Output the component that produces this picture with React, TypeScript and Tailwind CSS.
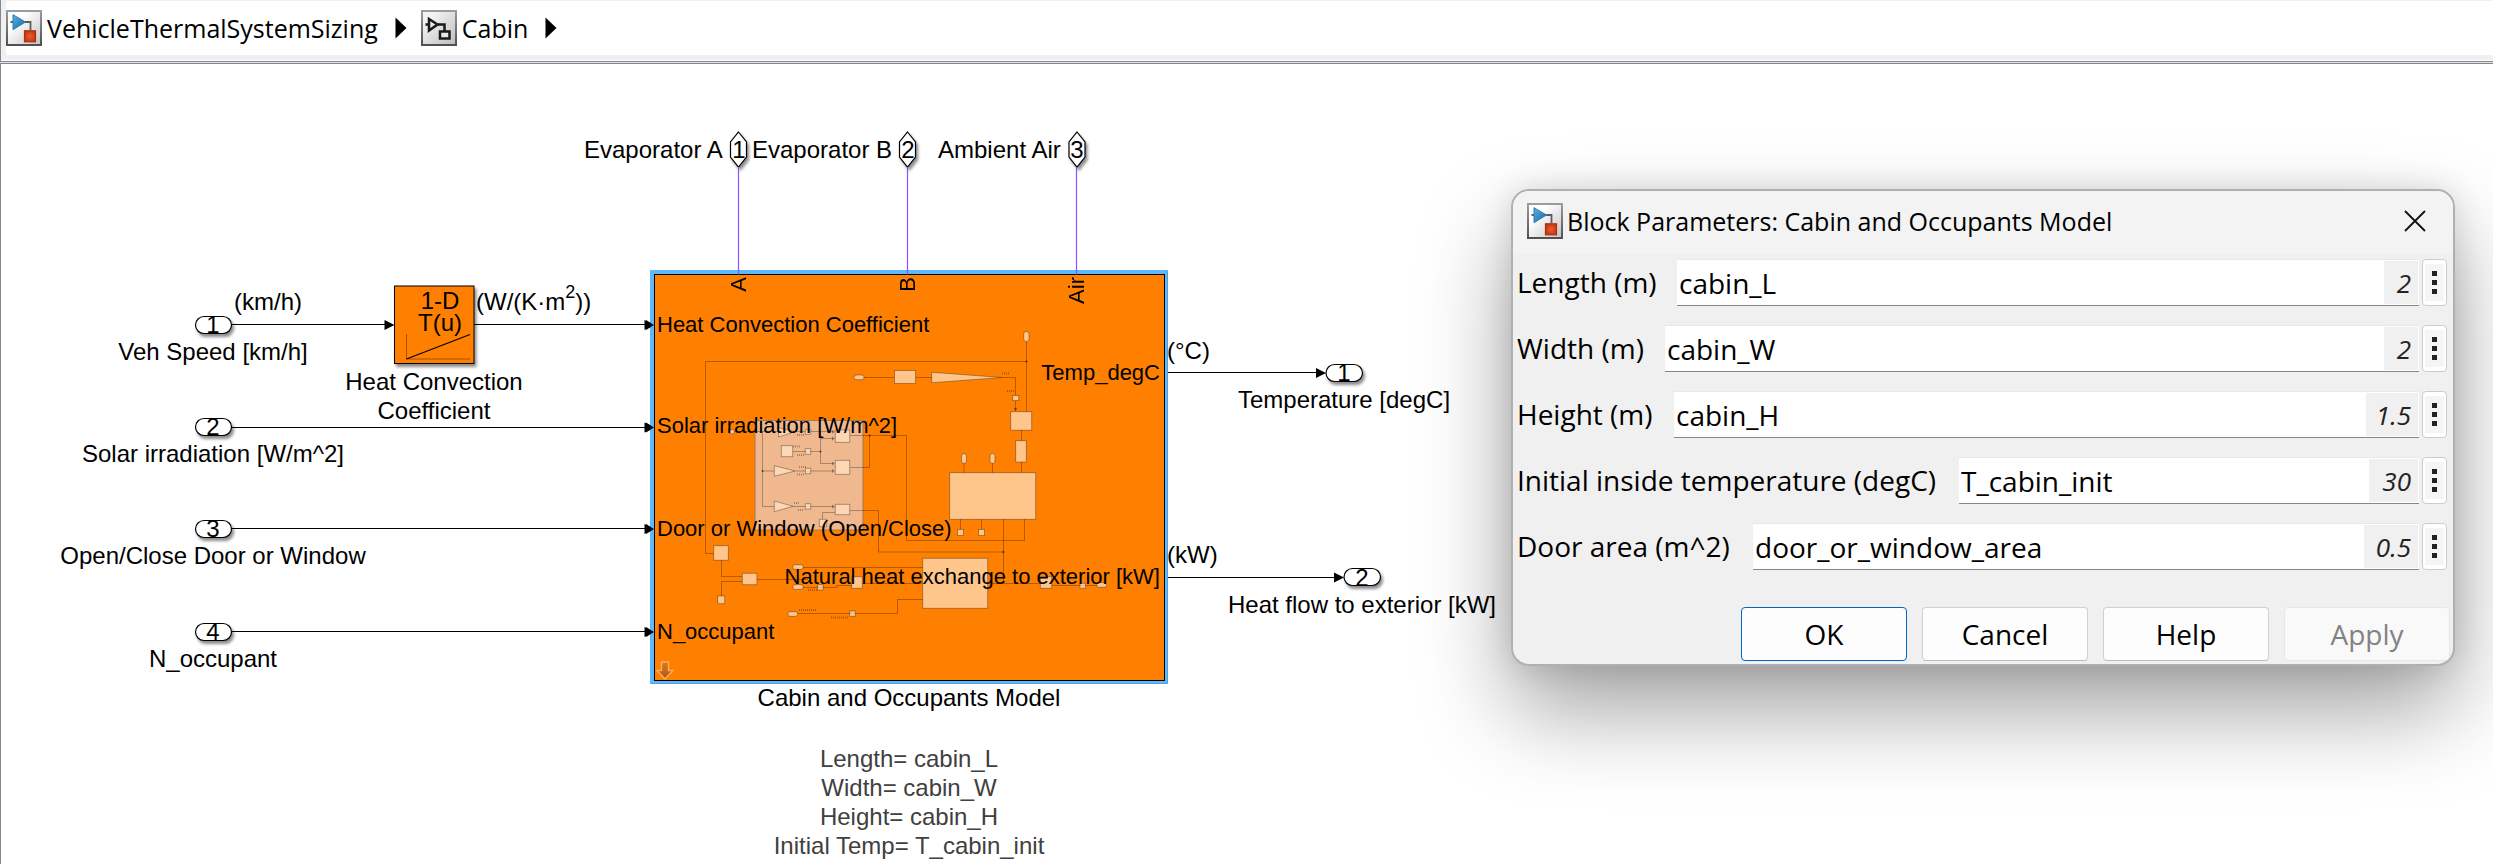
import React from "react";

type Param = {
  id: string;
  label: string;
  labelWidth: string;
  expression: string;
  value: string;
  valueWidth: string;
};

const params: Param[] = [
  { id: "length", label: "Length (m)", labelWidth: "w-[160px]", expression: "cabin_L", value: "2", valueWidth: "w-[34px]" },
  { id: "width", label: "Width (m)", labelWidth: "w-[148px]", expression: "cabin_W", value: "2", valueWidth: "w-[34px]" },
  { id: "height", label: "Height (m)", labelWidth: "w-[157px]", expression: "cabin_H", value: "1.5", valueWidth: "w-[52px]" },
  { id: "temperature", label: "Initial inside temperature (degC)", labelWidth: "w-[442px]", expression: "T_cabin_init", value: "30", valueWidth: "w-[49px]" },
  { id: "door", label: "Door area (m^2)", labelWidth: "w-[236px]", expression: "door_or_window_area", value: "0.5", valueWidth: "w-[54px]" },
];

const labels: { text: string; place: string }[] = [
  { text: "Evaporator A", place: "left-[584px] top-[72px]" },
  { text: "Evaporator B", place: "left-[752px] top-[72px]" },
  { text: "Ambient Air", place: "left-[938px] top-[72px]" },
  { text: "(km/h)", place: "left-[234px] top-[224px]" },
  { text: "Veh Speed [km/h]", place: "left-0 w-[426px] text-center top-[274px]" },
  { text: "Solar irradiation [W/m^2]", place: "left-0 w-[426px] text-center top-[376px]" },
  { text: "Open/Close Door or Window", place: "left-0 w-[426px] text-center top-[478px]" },
  { text: "N_occupant", place: "left-0 w-[426px] text-center top-[581px]" },
  { text: "(°C)", place: "left-[1167px] top-[273px]" },
  { text: "(kW)", place: "left-[1167px] top-[477px]" },
  { text: "Temperature [degC]", place: "left-[1194px] w-[300px] text-center top-[322px]" },
  { text: "Heat flow to exterior [kW]", place: "left-[1212px] w-[300px] text-center top-[527px]" },
  { text: "Cabin and Occupants Model", place: "left-[709px] w-[400px] text-center top-[620px]" },
  { text: "1", place: "left-[203px] w-[20px] text-center top-[247px]" },
  { text: "2", place: "left-[203px] w-[20px] text-center top-[349px]" },
  { text: "3", place: "left-[203px] w-[20px] text-center top-[451px]" },
  { text: "4", place: "left-[203px] w-[20px] text-center top-[554px]" },
  { text: "1", place: "left-[1334px] w-[20px] text-center top-[295px]" },
  { text: "2", place: "left-[1352px] w-[20px] text-center top-[500px]" },
  { text: "1", place: "left-[729px] w-[20px] text-center top-[72px]" },
  { text: "2", place: "left-[898px] w-[20px] text-center top-[72px]" },
  { text: "3", place: "left-[1067px] w-[20px] text-center top-[72px]" },
];

const blockPorts: { text: string; place: string }[] = [
  { text: "Heat Convection Coefficient", place: "left-[657px] top-[247px]" },
  { text: "Solar irradiation [W/m^2]", place: "left-[657px] top-[348px]" },
  { text: "Door or Window (Open/Close)", place: "left-[657px] top-[451px]" },
  { text: "N_occupant", place: "left-[657px] top-[554px]" },
  { text: "Temp_degC", place: "left-[860px] w-[300px] text-right top-[295px]" },
  { text: "Natural heat exchange to exterior [kW]", place: "left-[760px] w-[400px] text-right top-[499px]" },
];

const sidePorts: { text: string; place: string }[] = [
  { text: "A", place: "left-[725px]" },
  { text: "B", place: "left-[894px]" },
  { text: "Air", place: "left-[1063px]" },
];

function ModelIcon({ id }: { id: string }) {
  return (
    <svg width="36" height="36" viewBox="0 0 36 36" aria-hidden="true" className="shrink-0">
      <defs>
        <linearGradient id={id + "-bg"} x1="0" y1="0" x2="1" y2="1">
          <stop offset="0.3" stopColor="#ffffff" />
          <stop offset="1" stopColor="#c2c2c2" />
        </linearGradient>
        <linearGradient id={id + "-edge"} x1="0" y1="0" x2="0" y2="1">
          <stop offset="0" stopColor="#9c9c9c" />
          <stop offset="1" stopColor="#505050" />
        </linearGradient>
        <linearGradient id={id + "-tri"} x1="0" y1="0" x2="1" y2="1">
          <stop offset="0" stopColor="#5db4e6" />
          <stop offset="1" stopColor="#14629c" />
        </linearGradient>
        <radialGradient id={id + "-sq"}>
          <stop offset="0" stopColor="#ef5a2c" />
          <stop offset="1" stopColor="#c93a12" />
        </radialGradient>
      </defs>
      <rect x="1" y="1" width="34" height="34" fill={`url(#${id}-bg)`} stroke={`url(#${id}-edge)`} strokeWidth="2" />
      <path d="M4.500 12H7M19 12h5.500v8" fill="none" stroke="#5d5d5d" strokeWidth="1.800" />
      <path d="M7 4.700v15L19.500 12z" fill={`url(#${id}-tri)`} stroke="#2b7db8" strokeWidth="1" />
      <rect x="18.500" y="20.800" width="11" height="11" fill={`url(#${id}-sq)`} stroke="#a3300f" strokeWidth="1.200" />
    </svg>
  );
}

function SubsystemIcon() {
  return (
    <svg width="36" height="36" viewBox="0 0 36 36" aria-hidden="true" className="shrink-0">
      <defs>
        <linearGradient id="sub-bg" x1="0" y1="0" x2="1" y2="1">
          <stop offset="0.2" stopColor="#f4f4f4" />
          <stop offset="1" stopColor="#bcbcbc" />
        </linearGradient>
        <linearGradient id="sub-edge" x1="0" y1="0" x2="0" y2="1">
          <stop offset="0" stopColor="#9c9c9c" />
          <stop offset="1" stopColor="#505050" />
        </linearGradient>
      </defs>
      <rect x="1" y="1" width="34" height="34" fill="url(#sub-bg)" stroke="url(#sub-edge)" strokeWidth="2" />
      <g fill="#e8e8e8" stroke="#1a1a1a" strokeWidth="2.500">
        <path d="M4.500 14.500H8M17 14.500h6.500V21" fill="none" />
        <path d="M8 9v11.500l8.500-6z" />
        <rect x="19" y="21.500" width="9.500" height="7" />
      </g>
    </svg>
  );
}

function Chevron() {
  return (
    <svg width="12" height="22" viewBox="0 0 12 22" aria-hidden="true" className="shrink-0">
      <path d="M0.500 0.500v21L11.500 11z" fill="#000" />
    </svg>
  );
}

function Wires() {
  return (
    <svg width="1512" height="800" viewBox="0 64 1512 800" aria-hidden="true" className="absolute left-0 top-0">
      <defs>
        <filter id="drop" x="-20%" y="-20%" width="150%" height="150%">
          <feDropShadow dx="2" dy="3" stdDeviation="1.500" floodColor="#000" floodOpacity="0.45" />
        </filter>
        <linearGradient id="down" x1="0" y1="0" x2="0" y2="1">
          <stop offset="0" stopColor="#e07818" />
          <stop offset="1" stopColor="#a8581c" />
        </linearGradient>
      </defs>

      <g stroke="#000" strokeWidth="1.200" fill="none">
        <path d="M232 324.500H386M474 324.500H646M232 427.500H646M232 528.500H646M232 631.500H646M1165 372.500H1318M1165 577.500H1336" />
      </g>
      <g fill="#000">
        <path d="M384.500 320v10l10-5zM644.500 320v10l10-5zM644.500 422.500v10l10-5zM644.500 524v10l10-5zM644.500 627v10l10-5zM1316 368v10l10-5zM1334 572.500v10l10-5z" />
      </g>

      <g fill="#fff" stroke="#000" strokeWidth="1.200" filter="url(#drop)">
        <rect x="195.500" y="316.500" width="36" height="17" rx="8.500" />
        <rect x="195.500" y="418.500" width="36" height="17" rx="8.500" />
        <rect x="195.500" y="520.500" width="36" height="17" rx="8.500" />
        <rect x="195.500" y="623.500" width="36" height="17" rx="8.500" />
        <rect x="1326" y="364.500" width="36.500" height="17" rx="8.500" />
        <rect x="1344" y="568.500" width="36.500" height="17" rx="8.500" />
      </g>
      <g fill="#fff" stroke="#000" strokeWidth="1.200" filter="url(#drop)">
        <path d="M738.500 132l8 10v15l-8 10-8-10v-15z" />
        <path d="M907.500 132l8 10v15l-8 10-8-10v-15z" />
        <path d="M1077 132l8 10v15l-8 10-8-10v-15z" />
      </g>

      <g filter="url(#drop)">
        <rect x="394.500" y="286" width="79.500" height="77.500" fill="#ff8000" stroke="#000" />
      </g>
      <path d="M406.500 334v25H470" fill="none" stroke="#a65300" />
      <path d="M406.500 359L470 334.500" fill="none" stroke="#000" strokeWidth="1.200" />

      <rect x="650" y="270" width="518" height="414" fill="#5fb8fa" />
      <path d="M651 683.500H1167.500V271" fill="none" stroke="#4ba3e3" />
      <rect x="654.500" y="274.500" width="510" height="406" fill="#ff8000" stroke="#000" />
      <path d="M738.500 167V274.500M907.500 167V274.500M1076.500 167V274.500" fill="none" stroke="#8c52ff" strokeWidth="1.200" />
      <path d="M646 320v10l8-5zM646 422.500v10l8-5zM646 524v10l8-5zM646 627v10l8-5z" fill="#000" />

      <rect x="755" y="420.500" width="108" height="109.500" fill="#f0b88e" stroke="#a87850" />

      <g fill="none" stroke="#000" strokeOpacity="0.320" strokeWidth="0.900">
        <path d="M714 553.500H705.500V361.500H1026.500" />
        <path d="M1026.500 341V412" />
        <path d="M864 377.500H894M916 377.500H932M1002 377.500H1015.500V395M1015.500 401V411" />
        <path d="M1021.500 430V441M1021.500 462V473M964 463V473M992.500 463V473" />
        <path d="M960.500 519V529M981.500 519V529M1003.500 519V583.500M1024.500 519V540.500H906.500V435.500H850" />
        <path d="M734 431.500H778M762.500 431.500V506.500H774M762.500 471H774M796 431.500H833M793 451.500H820.500M820.500 438.500V463.500M820.500 438.500H833M820.500 463.500H833M795 471H833M793 506.500H833" />
        <path d="M850 467.500H869.500V435.500M850 510.500H878.500V552H1003.500M835 512.500H822.500V519" />
        <path d="M721.500 560V576.500H742M742 581.500H721.500V596M757 579.500H808" />
        <path d="M803 567.500H923M803 587.500H837V585.500H852M862 583.500H923M988 583.500H1040M1052 585.500H1097" />
        <path d="M798 613.500H897.500V599.500H923" />
      </g>

      <g fill="#ffffff" fillOpacity="0.550" stroke="#000" strokeOpacity="0.350" strokeWidth="0.900">
        <rect x="854" y="375" width="10" height="4.700" rx="2.300" />
        <rect x="894.500" y="370.500" width="21" height="13" />
        <path d="M931.700 372.300v10.400L1001.700 377.500z" />
        <rect x="1012.700" y="395.500" width="6" height="5" />
        <rect x="1010.700" y="411.700" width="21" height="18.500" />
        <rect x="1015.700" y="440.700" width="10.600" height="21.300" />
        <rect x="949.700" y="472.700" width="86" height="46.600" />
        <rect x="957.500" y="529.500" width="6" height="6" />
        <rect x="978.500" y="529.500" width="6" height="6" />
        <rect x="1023.700" y="331.500" width="5.300" height="10" rx="2.600" />
        <rect x="961.500" y="453.500" width="5" height="10" rx="2.500" />
        <rect x="990" y="453.500" width="5" height="10" rx="2.500" />
        <rect x="713.700" y="545.700" width="14.600" height="14.500" />
        <rect x="742.300" y="573.300" width="14.600" height="11.400" />
        <rect x="717.700" y="596" width="7" height="7.700" />
        <rect x="792.700" y="564.700" width="10.600" height="4.700" rx="2.300" />
        <rect x="792.700" y="584.700" width="10.600" height="4.700" rx="2.300" />
        <rect x="817.700" y="584.700" width="5.500" height="5.300" />
        <rect x="851.700" y="576.700" width="10.600" height="11.600" />
        <rect x="787.700" y="611.700" width="10" height="4.600" rx="2.300" />
        <rect x="849.700" y="611" width="5.600" height="5.300" />
        <rect x="922.700" y="558.300" width="65" height="50" />
        <rect x="1040.300" y="576.700" width="11.400" height="11.600" />
        <rect x="1080" y="583.300" width="5.600" height="5" />
        <rect x="1096.700" y="582.500" width="10" height="4.800" rx="2.300" />
      </g>
      <g fill="#ffdcbc" fillOpacity="0.850" stroke="#000" strokeOpacity="0.350" strokeWidth="0.900">
        <rect x="728.500" y="429.700" width="6" height="4" rx="2" />
        <path d="M778.500 427.500v9.500L795 431.700z" />
        <path d="M774.300 465.700v10.600L795 471z" />
        <path d="M774.300 501v10.700L793 506.300z" />
        <rect x="781.300" y="445.700" width="11.400" height="11" />
        <rect x="805.300" y="429.300" width="5.400" height="5" />
        <rect x="805.300" y="448.700" width="5.400" height="5.600" />
        <rect x="805.300" y="468.300" width="5.400" height="5.400" />
        <rect x="805.300" y="503.700" width="5.400" height="5.400" />
        <rect x="835.300" y="430" width="14.400" height="12.300" />
        <rect x="835.300" y="460.300" width="14.400" height="14" />
        <rect x="835.300" y="504.300" width="14.400" height="10.400" />
        <rect x="819.300" y="519.300" width="7.400" height="7.400" />
      </g>
      <g fill="#000" fillOpacity="0.550">
        <circle cx="1026.500" cy="361.500" r="1" />
        <circle cx="1003.500" cy="552" r="1" />
        <circle cx="869.500" cy="435.500" r="1" />
        <circle cx="762.500" cy="471" r="1" />
        <circle cx="820.500" cy="451.500" r="1" />
        <path d="M832 429.700v4l3-2zM832 436.500v4l3-2zM832 461.500v4l3-2zM832 469v4l3-2zM832 504.500v4l3-2zM1013.500 408h4l-2 3z" fillOpacity="0.350" />
      </g>
      <g stroke="#000" strokeOpacity="0.300" strokeWidth="2" strokeDasharray="1 1">
        <path d="M1002 373.500h7M1007 391h7M793 446.500h7M797 455h7M799 467h7M797 474.500h7M794 503h6M798 510h6M799 610h18M831 617.500h18M808 590h9M797 435h7" />
      </g>

      <path d="M661.500 662h7v8.500h4.500l-8 8.500-8-8.500h4.500z" fill="url(#down)" stroke="#ffab57" strokeWidth="1.500" />
    </svg>
  );
}

function BlockDialog() {
  return (
    <section
      role="dialog"
      aria-labelledby="dialog-title"
      className="absolute left-[1511px] top-[125px] w-[944px] overflow-hidden rounded-[18px] border-2 border-[#b0b0b0] bg-[#f0f0f0] font-['Open_Sans',sans-serif] text-black shadow-[0_44px_90px_rgba(0,0,0,0.37),0_0_30px_rgba(0,0,0,0.12)]"
    >
      <header className="flex h-[63px] items-center bg-[#f3f3f3] pb-[3px] pl-[14px] pr-[18px]">
        <ModelIcon id="dialog" />
        <h2 id="dialog-title" className="ml-[4px] flex-1 whitespace-nowrap text-[25px] leading-[36px]">
          Block Parameters: Cabin and Occupants Model
        </h2>
        <button type="button" aria-label="Close" className="flex h-[40px] w-[40px] items-center justify-center">
          <svg width="22" height="22" viewBox="0 0 22 22" aria-hidden="true">
            <path d="M1 1l20 20M21 1L1 21" stroke="#111" strokeWidth="1.800" fill="none" />
          </svg>
        </button>
      </header>
      <form className="pt-[5px]" onSubmit={(e) => e.preventDefault()}>
        <div className="flex flex-col gap-[19px] pl-[4px] pr-[6px]">
          {params.map((p) => (
            <div key={p.id} className="flex h-[47px] items-stretch">
              <label htmlFor={p.id} className={`${p.labelWidth} shrink-0 whitespace-nowrap text-[28px] leading-[47px]`}>
                {p.label}
              </label>
              <div className="flex min-w-0 flex-1 border-b border-t border-b-[#868686] border-t-[#e8e8e8] bg-white pr-px">
                <input
                  id={p.id}
                  type="text"
                  defaultValue={p.expression}
                  className="min-w-0 flex-1 bg-transparent pl-[2px] text-[28px] leading-[44px] outline-none"
                />
                <output
                  htmlFor={p.id}
                  className={`${p.valueWidth} my-px shrink-0 bg-[#f0f0f0] pr-[7px] text-right text-[26px] italic leading-[44px] text-[#222222]`}
                >
                  {p.value}
                </output>
              </div>
              <button
                type="button"
                aria-label={`${p.label} options`}
                className="ml-[3px] flex w-[25px] shrink-0 rounded-[4px] border border-[#cccccc] bg-white px-[2px] py-[4px]"
              >
                <span className="flex h-full w-full flex-col items-center justify-center gap-[4px] bg-[#f5f5f5]">
                  <span className="h-[5px] w-[5px] bg-[#222222]" />
                  <span className="h-[5px] w-[5px] bg-[#222222]" />
                  <span className="h-[5px] w-[5px] bg-[#222222]" />
                </span>
              </button>
            </div>
          ))}
        </div>
        <div className="mt-[37px] flex justify-end gap-[15px] pb-[3px] pr-[3px] text-[28px] leading-[52px]">
          <button type="submit" className="h-[54px] w-[166px] rounded-[4px] border border-[#0067c0] bg-[#fdfdfd]">
            OK
          </button>
          <button type="button" className="h-[54px] w-[166px] rounded-[4px] border border-[#d0d0d0] border-b-[#bcbcbc] bg-[#fdfdfd]">
            Cancel
          </button>
          <button type="button" className="h-[54px] w-[166px] rounded-[4px] border border-[#d0d0d0] border-b-[#bcbcbc] bg-[#fdfdfd]">
            Help
          </button>
          <button type="button" disabled className="h-[54px] w-[166px] rounded-[4px] border border-[#e6e6e6] bg-[#f9f9f9] text-[#838383]">
            Apply
          </button>
        </div>
      </form>
    </section>
  );
}

export default function App() {
  return (
    <div className="flex min-h-screen flex-col overflow-hidden bg-white text-black">
      <header className="shadow-[inset_1px_0_0_#868690]">
        <div className="ml-px bg-[#f0f0f0] pb-[5px] pl-[5px] pt-px">
          <nav
            aria-label="Model path"
            className="flex h-[54px] items-center bg-white font-['Open_Sans',sans-serif] text-[25px] leading-[36px]"
          >
            <a href="#model" className="flex items-center gap-[5px]">
              <ModelIcon id="crumb" />
              VehicleThermalSystemSizing
            </a>
            <span className="ml-[17px] mr-[14px] flex">
              <Chevron />
            </span>
            <a href="#cabin" className="flex items-center gap-[5px]">
              <SubsystemIcon />
              Cabin
            </a>
            <span className="ml-[17px] flex">
              <Chevron />
            </span>
          </nav>
        </div>
        <div className="mt-px h-[3px] border-y border-[#868690] bg-[#e4e4e8]" />
      </header>

      <main className="relative flex-1 shadow-[inset_1px_0_0_#868690]">
        <Wires />
        <div className="font-['Liberation_Sans',Arial,sans-serif] text-[24px] leading-[28px]">
          {labels.map((l, i) => (
            <span key={i} className={`absolute whitespace-nowrap ${l.place}`}>
              {l.text}
            </span>
          ))}
          <p className="absolute left-[400px] top-[226px] w-[80px] text-center leading-[22px]">
            1-D
            <br />
            T(u)
          </p>
          <span className="absolute left-[476px] top-[224px] whitespace-nowrap">
            (W/(K·m<sup className="top-[-12px] text-[18px] leading-[0px]">2</sup>))
          </span>
          <p className="absolute left-[334px] top-[303px] w-[200px] text-center leading-[29px]">
            Heat Convection Coefficient
          </p>
          <div className="absolute left-[709px] top-[680px] w-[400px] text-center leading-[29px] text-[#404040]">
            <p>Length= cabin_L</p>
            <p>Width= cabin_W</p>
            <p>Height= cabin_H</p>
            <p>Initial Temp= T_cabin_init</p>
          </div>
        </div>
        <div className="font-['Liberation_Sans',Arial,sans-serif] text-[22px] leading-[28px]">
          {blockPorts.map((l) => (
            <span key={l.text} className={`absolute whitespace-nowrap ${l.place}`}>
              {l.text}
            </span>
          ))}
          {sidePorts.map((l) => (
            <span key={l.text} className={`absolute top-[213px] rotate-180 whitespace-nowrap [writing-mode:vertical-rl] ${l.place}`}>
              {l.text}
            </span>
          ))}
        </div>
        <BlockDialog />
      </main>
    </div>
  );
}
